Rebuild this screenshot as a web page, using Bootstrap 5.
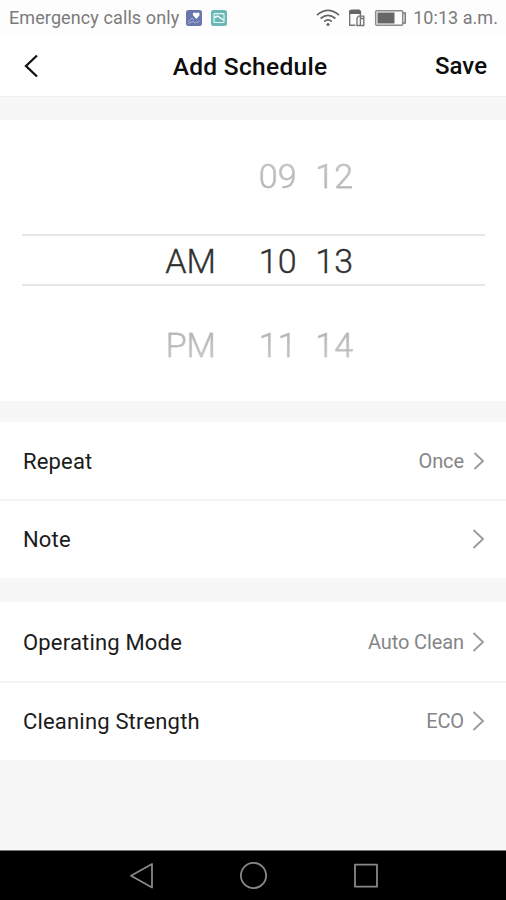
<!DOCTYPE html>
<html lang="en">
<head>
<meta charset="utf-8">
<meta name="viewport" content="width=device-width, initial-scale=1">
<title>Add Schedule</title>
<link href="https://cdn.jsdelivr.net/npm/bootstrap@5.3.0/dist/css/bootstrap.min.css" rel="stylesheet">
<style>
  body { font-family: Roboto, "Liberation Sans", sans-serif; background: #f7f7f7; color: #1b1b1b; }
  .screen { height: 900px; overflow: hidden; }
  .status-bar { height: 36px; padding: 0 8px 1px 9px; font-size: 18px; color: #7b7b7b; background: #fdfdfd; }
  .carrier { letter-spacing: .1px; margin-right: 7px; }
  .clock { letter-spacing: .05px; margin-left: 6px; }
  .title-bar { height: 61px; padding: 0 19px 0 23px; border-bottom: 1px solid #efefef; font-size: 24px; font-weight: 500; color: #0c0c0c; }
  .title-bar h1 { font-size: 24.5px; font-weight: 500; letter-spacing: .3px; padding-top: 1px; }
  .picker { height: 281px; margin-top: 23px; padding: 29px 21px 0 22px; font-size: 34px; font-weight: 300; color: #303030; }
  .wheel-row { display: grid; grid-template-columns: 216px 80.5px 56.5px; margin-left: -22px; height: 54px; line-height: 54px; text-align: right; -webkit-text-stroke: .35px; }
  .selected { height: 52px; margin: 31px 0 32px; border-top: 2px solid #e6e6e6; border-bottom: 2px solid #e6e6e6; }
  .selected .wheel-row { height: 48px; line-height: 50px; }
  .faded { -webkit-text-stroke: .35px #bdbdbd; }
  .faded span { background: linear-gradient(#c8c8c8 20%, #b2b2b2 80%); -webkit-background-clip: text; background-clip: text; color: transparent; }
  .faded.lower span { background-image: linear-gradient(#b0b0b0 20%, #cccccc 80%); }
  .settings { margin-top: 21px; }
  .settings + .settings { margin-top: 24px; }
  .setting { height: 78px; padding: 0 21px 0 23px; font-size: 22px; letter-spacing: .18px; }
  .setting + .setting { border-top: 2px solid #f5f5f5; }
  .settings .setting:first-child { height: 77px; padding-top: 2px; }
  .settings .setting:last-child { height: 79px; }
  .settings.modes .setting:first-child { height: 79px; }
  .value { font-size: 20px; color: #858587; margin-right: 8px; padding-bottom: 1px; letter-spacing: -.1px; }
  .setting svg { margin-bottom: 2px; }
  .nav-keys { height: 50px; background: #000; border-top: 1px solid #777; }
</style>
</head>
<body>
<div class="screen d-flex flex-column">
  <div class="status-bar d-flex align-items-center">
    <span class="carrier">Emergency calls only</span>
    <svg width="16" height="16" viewBox="0 0 16 16"><rect width="16" height="16" rx="2.5" fill="#6878ae"/><path d="M10.400 9 7.200 5.400C5.800 3 8.700 1.400 10.300 3.200 12 1.400 14.600 3.100 13.300 5.600Z" fill="#fff"/><path d="m2 12 4-4 2 2m-6 3.500 5-2 2 1.500 4.500-2" fill="none" stroke="#a9b3d6" stroke-width="1"/></svg>
    <svg class="ms-2" width="17" height="16" viewBox="-1 0 17 16"><rect width="16" height="16" rx="2.5" fill="#68b8b7"/><rect x="3" y="3.700" width="10" height="8.800" rx="1" fill="none" stroke="#e5f5f5" stroke-width="1.2"/><path d="M3.500 7.500 6.500 6l6 4" fill="none" stroke="#fff" stroke-width="1.5"/></svg>
    <svg class="ms-auto" width="24" height="18" viewBox="0 0 24 18" fill="none" stroke="#666" stroke-width="1.7"><path d="M1 6.100Q12-3.400 23 6.100M4.600 9.500Q12 3.100 19.400 9.500M8.200 12.600Q12 9.200 15.800 12.600"/><circle cx="12" cy="15.500" r="1.600" fill="#666" stroke="none"/></svg>
    <svg class="ms-2" width="18" height="18" viewBox="0 0 18 18" fill="none" stroke="#777" stroke-width="1.4"><path d="M7.500 16.300H1.700V1.200M12.400 4v3"/><path d="M1 5V2.500L3 .500h8.500L13.100 2v3Z" fill="#666" stroke="none"/><path d="M9 16.500V9.200l1.400-2.100h5.400v9.400Z"/><path d="M12.400 7v9.500M12.400 9.500h3.400"/></svg>
    <svg class="ms-2" width="33" height="18" viewBox="0 0 33 18"><rect x="1.700" y="1.700" width="27" height="14.600" rx="1" fill="none" stroke="#8a8a8a" stroke-width="1.5"/><path d="M3.500 3.500h17v11h-17Z" fill="#666"/><path d="M29 4h2.200v10H29" fill="none" stroke="#777" stroke-width="1.5"/></svg>
    <span class="clock">10:13 a.m.</span>
  </div>

  <header class="title-bar bg-white d-flex align-items-center justify-content-between">
    <svg width="42" height="24" viewBox="0 0 42 24" fill="none" stroke="#111" stroke-width="2.3"><path d="M14 1.500 3 12l11 10.500"/></svg>
    <h1 class="m-0">Add Schedule</h1>
    <span>Save</span>
  </header>

  <section class="picker bg-white">
    <div class="wheel-row faded"><span></span><span>09</span><span>12</span></div>
    <div class="selected"><div class="wheel-row"><span>AM</span><span>10</span><span>13</span></div></div>
    <div class="wheel-row faded lower"><span>PM</span><span>11</span><span>14</span></div>
  </section>

  <section class="settings bg-white">
    <div class="setting d-flex align-items-center"><span class="me-auto">Repeat</span><span class="value">Once</span>
      <svg width="13" height="20" viewBox="0 0 13 20" fill="none" stroke="#999" stroke-width="1.8"><path d="m2.500 2 8.500 8-8.500 8"/></svg></div>
    <div class="setting d-flex align-items-center"><span class="me-auto">Note</span>
      <svg width="13" height="20" viewBox="0 0 13 20" fill="none" stroke="#999" stroke-width="1.8"><path d="m1.500 1 9.500 9-9.500 9"/></svg></div>
  </section>

  <section class="settings modes bg-white">
    <div class="setting d-flex align-items-center"><span class="me-auto">Operating Mode</span><span class="value">Auto Clean</span>
      <svg width="13" height="20" viewBox="0 0 13 20" fill="none" stroke="#999" stroke-width="1.8"><path d="m1.500 1 9.500 9-9.500 9"/></svg></div>
    <div class="setting d-flex align-items-center"><span class="me-auto">Cleaning Strength</span><span class="value">ECO</span>
      <svg width="13" height="20" viewBox="0 0 13 20" fill="none" stroke="#999" stroke-width="1.8"><path d="m1.500 1 9.500 9-9.500 9"/></svg></div>
  </section>

  <nav class="nav-keys mt-auto d-flex justify-content-center align-items-center">
    <svg width="260" height="28" viewBox="0 0 260 28" fill="none" stroke="#888" stroke-width="1.8" stroke-linejoin="round"><path d="M29 2v23.500L8 13.700Z"/><circle cx="130.500" cy="13.500" r="12.600"/><rect x="232" y="2.700" width="22" height="22"/></svg>
  </nav>
</div>
<script src="https://cdn.jsdelivr.net/npm/bootstrap@5.3.0/dist/js/bootstrap.bundle.min.js"></script>
</body>
</html>
